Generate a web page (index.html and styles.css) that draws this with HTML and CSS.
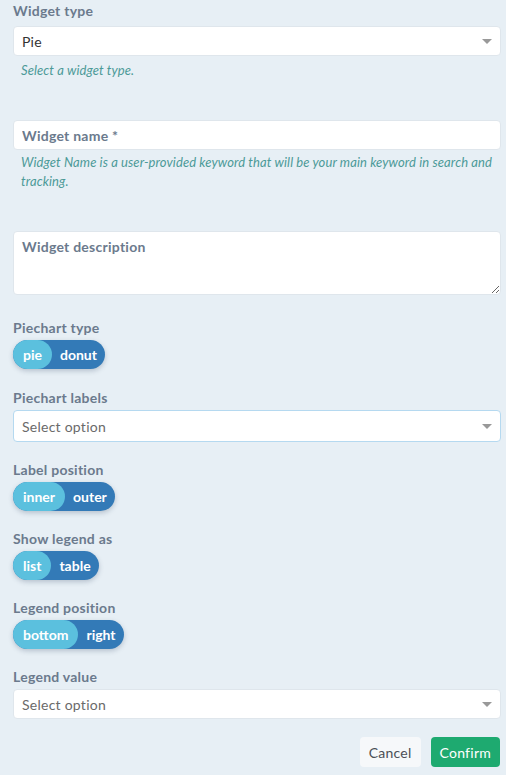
FILE: index.html
```html
<!DOCTYPE html>
<html>
<head>
<meta charset="utf-8">
<link rel="stylesheet" href="styles.css">
</head>
<body>
<form class="form">
  <div class="field f-type">
    <label class="label lbl-first">Widget type</label>
    <div class="select"><span class="value">Pie</span><svg class="caret" width="10" height="5" viewBox="0 0 10 5"><path d="M0 0H10L5 5Z" fill="#999"/></svg></div>
    <p class="help help-one">Select a widget type.</p>
  </div>
  <div class="field f-name">
    <input class="input" type="text" placeholder="Widget name *">
    <p class="help help-two">Widget Name is a user-provided keyword that will be your main keyword in search and tracking.</p>
  </div>
  <div class="field f-desc">
    <textarea class="textarea" placeholder="Widget description"></textarea>
  </div>
  <div class="field f-pietype">
    <label class="label">Piechart type</label>
    <div class="toggle"><span class="seg on">pie</span><span class="seg">donut</span></div>
  </div>
  <div class="field">
    <label class="label">Piechart labels</label>
    <div class="select focus"><span class="placeholder">Select option</span><svg class="caret" width="10" height="5" viewBox="0 0 10 5"><path d="M0 0H10L5 5Z" fill="#999"/></svg></div>
  </div>
  <div class="field">
    <label class="label">Label position</label>
    <div class="toggle"><span class="seg on">inner</span><span class="seg">outer</span></div>
  </div>
  <div class="field">
    <label class="label">Show legend as</label>
    <div class="toggle"><span class="seg on">list</span><span class="seg">table</span></div>
  </div>
  <div class="field">
    <label class="label">Legend position</label>
    <div class="toggle"><span class="seg on">bottom</span><span class="seg">right</span></div>
  </div>
  <div class="field f-last">
    <label class="label">Legend value</label>
    <div class="select"><span class="placeholder">Select option</span><svg class="caret" width="10" height="5" viewBox="0 0 10 5"><path d="M0 0H10L5 5Z" fill="#999"/></svg></div>
  </div>
  <div class="actions">
    <button type="button" class="btn btn-cancel">Cancel</button>
    <button type="button" class="btn btn-confirm">Confirm</button>
  </div>
</form>
</body>
</html>
```
FILE: styles.css
```css
html, body {
  margin: 0;
  padding: 0;
  background: #e7eff5;
}
body {
  font-family: Lato, "Noto Sans", sans-serif;
  color: #333;
  letter-spacing: 0.25px;
}
.form {
  padding: 3px 5px 0 13px;
  display: flex;
  flex-direction: column;
}
.field {
  display: flex;
  flex-direction: column;
  align-items: flex-start;
  margin-bottom: 20px;
}
.f-type { margin-bottom: 40px; }
.f-name { margin-bottom: 40px; }
.f-desc { margin-bottom: 25px; }
.f-pietype { margin-bottom: 21px; }
.f-last { margin-bottom: 18px; }
.label {
  display: block;
  font-size: 14px;
  line-height: 16px;
  font-weight: 700;
  color: #6b7a8d;
  margin-bottom: 4px;
}
.lbl-first { margin-bottom: 7px; }
.select, .input, .textarea {
  box-sizing: border-box;
  width: 100%;
  background: #fff;
  border: 1px solid #dfe6ec;
  border-radius: 4px;
}
.select {
  height: 30px;
  display: flex;
  align-items: center;
  justify-content: space-between;
  padding: 0 8px 0 8px;
  font-size: 14px;
}
.select.focus {
  height: 32px;
  border-color: #b5d9f0;
}
.value { color: #333; }
.placeholder { color: #6a6a6a; }
.caret { margin-top: 1px; }
.input {
  height: 30px;
  padding: 0 8px;
  font-family: inherit;
  font-size: 14px;
  letter-spacing: 0.25px;
  outline: none;
}
.input::placeholder, .textarea::placeholder {
  color: #6b7a8d;
  font-weight: 700;
  opacity: 1;
}
.textarea {
  height: 64px;
  padding: 6px 8px;
  font-family: inherit;
  font-size: 14px;
  letter-spacing: 0.25px;
  resize: vertical;
  outline: none;
  display: block;
}
.help {
  margin: 0;
  font-size: 13px;
  line-height: 19px;
  font-style: italic;
  color: #4c9a98;
  padding-left: 8px;
  letter-spacing: 0.1px;
}
.help-one { margin-top: 5px; }
.help-two { margin-top: 3px; }
.toggle {
  display: inline-flex;
  height: 29px;
  align-items: stretch;
  background: #337ab7;
  border-radius: 15px;
  box-shadow: 0 2px 5px rgba(40, 60, 90, 0.25);
}
.seg {
  display: flex;
  align-items: center;
  padding: 0 8px;
  color: #fff;
  font-size: 14px;
  font-weight: 700;
  letter-spacing: 0;
}
.seg.on {
  background: #5bc0de;
  border-radius: 15px;
  padding: 0 10px;
}
.actions {
  display: flex;
  justify-content: flex-end;
  gap: 10px;
  padding-right: 1px;
}
.btn {
  height: 30px;
  border: none;
  border-radius: 4px;
  font-family: inherit;
  font-size: 14px;
  letter-spacing: 0.25px;
  padding: 0 9px;
}
.btn-cancel {
  background: #f6f8fa;
  color: #4b4f56;
}
.btn-confirm {
  background: #1eaa70;
  color: #fff;
}
```
